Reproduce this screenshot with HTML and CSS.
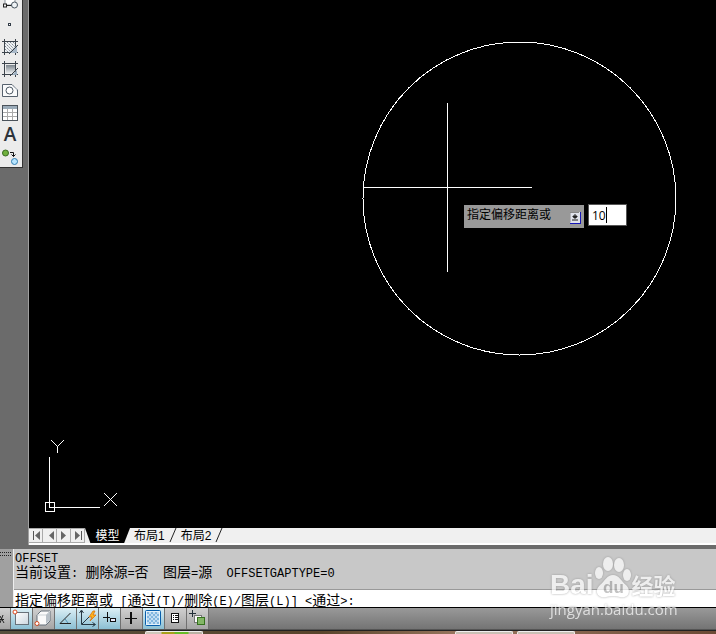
FILE: index.html
```html
<!DOCTYPE html>
<html lang="zh-CN">
<head>
<meta charset="utf-8">
<title>CAD</title>
<link rel="stylesheet" href="styles.css">
</head>
<body>
<main class="workspace">
  <aside class="dock">
    <div class="tools">
      <button class="tool" aria-label="块"><svg width="22" height="22"><path d="M5 5H15V14H5Z" fill="#fff" stroke="#8a939c"/><path d="M4.500 14.500H13" stroke="#222"/><rect x="3.500" y="13" width="3" height="3" fill="#eee" stroke="#222"/><circle cx="14.500" cy="14" r="3" fill="#eef2f5" stroke="#48545f"/></svg></button>
      <button class="tool" aria-label="点"><svg width="22" height="22"><rect x="8.500" y="10.500" width="2" height="2" fill="#fff" stroke="#333d48"/></svg></button>
      <button class="tool" aria-label="图案填充"><svg width="22" height="22"><path d="M4.500 4V20M15.500 4V20M2 6.500H18M2 17.500H18" stroke="#3c444c" fill="none"/><path d="M5 7H15V17H5Z" fill="#eef1f4"/><path d="M5 14l3 3M5 11l6 6M5 8l9 9M7 7l8 8M10 7l5 5M13 7l2 2" stroke="#7b858f" stroke-dasharray="2 1"/><path d="M9 18L17 10V18Z" fill="#a8b8c8"/><path d="M9 19l9-9" stroke="#343c44"/></svg></button>
      <button class="tool" aria-label="渐变色"><svg width="22" height="22"><defs><linearGradient id="shade" x1="0" y1="0" x2="0" y2="1"><stop stop-color="#7b858d"/><stop offset="1" stop-color="#f4f5f6"/></linearGradient></defs><path d="M4.500 4V20M15.500 4V20M2 6.500H18M2 17.500H18" stroke="#3c444c"/><rect x="6" y="8" width="9" height="9" fill="url(#shade)"/><path d="M12 18l5-5v5Z" fill="#9dafc0"/><path d="M10 19l8-8" stroke="#343c44"/></svg></button>
      <button class="tool" aria-label="面域"><svg width="22" height="22"><path d="M2.500 5.500H12L17.500 11V17.500H2.500Z" fill="#f9fafb" stroke="#56616d"/><path d="M13 6l4 4v2Z" fill="#c5ccd2"/><circle cx="9.500" cy="11.500" r="3.500" fill="#fff" stroke="#4b5763"/></svg></button>
      <button class="tool" aria-label="表格"><svg width="22" height="22"><rect x="2.500" y="4.500" width="15" height="15" fill="#fff" stroke="#4b535b"/><path d="M3 6.500H17" stroke="#9aabb9" stroke-width="3"/><path d="M3 11.500H17M3 15.500H17M7.500 8V19M12.500 8V19" stroke="#aaa"/></svg></button>
      <button class="tool letter" aria-label="多行文字">A</button>
      <button class="tool" aria-label="添加选定对象"><svg width="22" height="22"><circle cx="5.500" cy="8" r="3" fill="#70b13d" stroke="#386b22"/><path d="M10 7.500h3.500v4M11.500 9.500l2 2 2-2" stroke="#111" fill="none"/><circle cx="14.500" cy="16.500" r="3" fill="#b7e5ff" stroke="#317eb1"/></svg></button>
    </div>
  </aside>
  <section class="view">
    <div class="canvas">
      <svg class="drawing" fill="none" stroke="#fff" shape-rendering="crispEdges">
        <circle cx="490.500" cy="198.500" r="156.500"/>
        <path d="M418.500 103V272M334 187.500H503"/>
        <path d="M16 502.500H25V511.500H16ZM20.500 457V507.500H71"/>
        <path d="M22 440L28.500 446.500L35 440M28.500 446V453M75 493L88 506M88 493L75 506"/>
      </svg>
      <div class="prompt">
        <label class="hint" for="distance">指定偏移距离或</label>
        <button class="options" aria-label="选项"><svg width="11" height="12"><path d="M0 0H11V12H0Z" fill="#1616b8"/><path d="M0 0H10V11H0Z" fill="#e0e3ec"/><path d="M0 10.500V.500H9" fill="none" stroke="#888"/><path d="M5 2l0 2M3 4H7V5H6V6H4V5H3ZM2 8H8" fill="#222" stroke="#222"/></svg></button>
        <span class="entry"><input id="distance" value="10"><i class="caret"></i></span>
      </div>
    </div>
    <nav class="tabs">
      <button class="step" aria-label="第一个"><svg width="14" height="14"><path d="M4.500 2V11" stroke="#555"/><path d="M11 2V11L6 6.500Z" fill="#666"/></svg></button>
      <button class="step" aria-label="上一个"><svg width="14" height="14"><path d="M11 2V11L6 6.500Z" fill="#666"/></svg></button>
      <button class="step" aria-label="下一个"><svg width="14" height="14"><path d="M4 2V11L9 6.500Z" fill="#666"/></svg></button>
      <button class="step" aria-label="最后一个"><svg width="14" height="14"><path d="M10.500 2V11" stroke="#555"/><path d="M4 2V11L9 6.500Z" fill="#666"/></svg></button>
      <button class="tab current">模型</button>
      <button class="tab">布局1</button><svg class="slash" width="8" height="15"><path d="M7 0L1 14" stroke="#222"/></svg>
      <button class="tab">布局2</button><svg class="slash" width="8" height="15"><path d="M7 0L1 14" stroke="#222"/></svg>
    </nav>
  </section>
</main>
<section class="command">
  <div class="grip"></div>
  <div class="log">
    <p class="line"><code>OFFSET</code></p>
    <p class="line">当前设置<code>: </code>删除源<code>=</code>否<code>  </code>图层<code>=</code>源<code>  OFFSETGAPTYPE=0</code></p>
    <p class="line ask">指定偏移距离或<code> [</code>通过<code>(T)/</code>删除<code>(E)/</code>图层<code>(L)] &lt;</code>通过<code>&gt;:</code></p>
  </div>
</section>
<footer class="status">
  <button class="mode" aria-label="推断约束"><svg width="22" height="22"><path d="M10 11.500h5M11 15l3-8M11 8l4 7" stroke="#222"/></svg></button>
  <button class="mode on" aria-label="捕捉"><svg width="22" height="22"><defs><linearGradient id="sheet" x2="1" y2="1"><stop stop-color="#fff"/><stop offset="1" stop-color="#ccd7df"/></linearGradient></defs><rect x="4.500" y="4.500" width="13" height="12" fill="url(#sheet)" stroke="#68727a"/><circle cx="4" cy="4" r="2" fill="#fff" stroke="#e14c20"/></svg></button>
  <button class="mode" aria-label="三维捕捉"><svg width="22" height="22"><path d="M4 7L8 3H17V13L13 17H4Z" fill="#fafafa" stroke="#66717b"/><path d="M13 7V16L17 12V4Z" fill="#b8c0c7"/><path d="M4 7H13L17 3" fill="none" stroke="#ccd2d6"/><circle cx="4" cy="15.500" r="2" fill="#fff" stroke="#d4481d"/></svg></button>
  <button class="mode on" aria-label="极轴"><svg width="22" height="22"><path d="M15.500 5L5 15.500H16" fill="none" stroke="#222"/><path d="M10 11l3 4" stroke="#4f91b3"/></svg></button>
  <button class="mode on" aria-label="动态 UCS"><svg width="22" height="22"><path d="M4.500 3V16.500H18M2.500 5l2-3 2 3M15.500 14.500l3 2-3 2M5 16L12 9" fill="none" stroke="#273843"/><path d="M16 3L12 9h3l-2 4 6-6h-3l2-4Z" fill="#ffb51b" stroke="#d9700b" stroke-width=".8"/></svg></button>
  <button class="mode on" aria-label="动态输入"><svg width="22" height="22"><path d="M8.500 4V14M4 9.500H11" stroke="#111"/><rect x="11.500" y="10.500" width="5" height="3" fill="#eef" stroke="#111"/></svg></button>
  <button class="mode" aria-label="线宽"><svg width="22" height="22"><path d="M10 4V16" stroke="#111" stroke-width="2"/><path d="M4 10.500H16" stroke="#111"/></svg></button>
  <button class="mode on" aria-label="透明度"><svg width="22" height="22"><defs><pattern id="check" width="4" height="4" patternUnits="userSpaceOnUse"><path d="M0 0h4v4H0Z" fill="#c2def2"/><path d="M0 0h2v2H0ZM2 2h2v2H2Z" fill="#82b6df"/></pattern></defs><rect x="2.500" y="2.500" width="15" height="15" rx="1" fill="url(#check)" stroke="#075fac"/><rect x="3.500" y="3.500" width="13" height="13" fill="none" stroke="#e4f2fb"/></svg></button>
  <button class="mode" aria-label="快捷特性"><svg width="22" height="22"><rect x="6.500" y="5.500" width="7" height="9" fill="#fff" stroke="#111"/><path d="M8 7.500h1M10 7.500h3M8 9.500h1M10 9.500h3M8 11.500h1M10 11.500h3" stroke="#111"/></svg></button>
  <button class="mode" aria-label="选择循环"><svg width="22" height="22"><path d="M5.500 2V9M2 5.500H9" stroke="#222e38"/><rect x="7.500" y="7.500" width="7" height="7" fill="#fafafa" stroke="#777"/><rect x="10.500" y="9.500" width="7" height="7" fill="#83b667" stroke="#35711e"/></svg></button>
</footer>
<div class="taskbar"><i class="app first"></i><i class="app second"></i><i class="app third"></i></div>
<div class="watermark">
  <div class="brand"><b class="bai">Bai</b><svg class="paw" width="38" height="42"><g fill="#fff"><ellipse cx="5" cy="16" rx="4" ry="6"/><ellipse cx="14" cy="7" rx="5" ry="7"/><ellipse cx="25" cy="8" rx="5" ry="7"/><ellipse cx="33" cy="18" rx="4" ry="6"/><path d="M19 18C13 18 11 24 6 28C-1 35 5 42 12 40Q19 38 26 40C34 42 38 34 32 28C27 24 25 18 19 18Z"/></g><text class="du" x="9" y="36">du</text></svg><b class="cn">经验</b></div>
  <div class="site">jingyan.baidu.com</div>
</div>
</body>
</html>
```

FILE: styles.css
```css
* { box-sizing: border-box; }
body {
  margin: 0;
  height: 100vh;
  display: flex;
  flex-direction: column;
  position: relative;
  overflow: hidden;
  background: #6b6b6b;
  color: #000;
  font: 12px/14px "Liberation Sans", "Noto Sans CJK SC", sans-serif;
}
button, input { margin: 0; padding: 0; border: 0; border-radius: 0; font: inherit; color: inherit; }
button { background: none; }
svg { display: block; flex: none; }

.workspace { flex: 1; min-height: 0; display: flex; }
.dock { width: 28px; flex: none; overflow: hidden; }
.tools {
  width: 23px;
  margin-top: -9px;
  background: #ececec;
  border-right: 1px solid #333;
  border-bottom: 1px solid #333;
}
.tool { display: block; width: 22px; height: 22px; }
.letter { padding-right: 2px; font: 600 19px/22px "Open Sans", sans-serif; color: #2c333a; }
.view { flex: 1; min-width: 0; display: flex; flex-direction: column; border-left: 1px solid #a0a0a0; }
.canvas { flex: 1; min-height: 0; position: relative; background: #000; }
.drawing { width: 100%; height: 100%; }

.prompt { position: absolute; left: 435px; top: 204px; display: flex; align-items: flex-start; }
.hint { width: 120px; height: 23px; margin-top: 1px; padding-left: 3px; line-height: 20px; background: #999; }
.options { position: absolute; left: 106px; top: 8px; }
.entry { position: relative; margin-left: 4px; }
.entry input { display: block; width: 39px; height: 22px; padding-left: 3px; background: #fff; border: 1px solid #555; font: 12px/20px "Open Sans", sans-serif; }
.caret { position: absolute; left: 18px; top: 3px; width: 1px; height: 16px; background: #000; }

.tabs { height: 17px; flex: none; display: flex; background: #f0f0f0; border-bottom: 2px solid #fff; }
.step { width: 14px; height: 15px; border: 1px solid #aaa; border-width: 1px 1px 1px 0; }
.tab { height: 15px; padding: 2px 4px 0; line-height: 13px; }
.current { width: 45px; padding: 2px 10px 0; background: #000; color: #fff; clip-path: polygon(0 0, 100% 0, 87% 100%, 12% 100%); }

.command { display: flex; margin-top: 4px; background: #c8c8c8; }
.grip { width: 14px; flex: none; background: #a0a0a0; border-right: 1px solid #eee; position: relative; }
.grip::before { content: ""; position: absolute; top: 3px; left: 0; width: 12px; height: 4px; background: repeating-linear-gradient(90deg, #222 0 1px, transparent 1px 2px); mask: linear-gradient(#000 0 1px, transparent 1px 3px, #000 3px); }
.log { flex: 1; min-width: 0; }
.line { height: 15px; margin: 0; padding-left: 1px; white-space: pre; font-family: "Noto Sans CJK SC", sans-serif; font-size: 14px; line-height: 15px; }
.line code { font-family: "Liberation Mono", monospace; font-size: 12px; }
.ask { height: 18px; margin-top: 10px; line-height: 19px; background: #fff; border-top: 1px solid #999; }

.status { height: 23px; display: flex; overflow: hidden; background: linear-gradient(#999, #747474); border-top: 1px solid #000; border-bottom: 1px solid #555; }
.mode { width: 22px; height: 21px; flex: none; background: linear-gradient(#d0d0d0, #a5a5a5); border-right: 1px solid #707070; }
.mode:first-child { margin-left: -11px; }
.on { background: linear-gradient(#dceff5, #8bbfd3); }
.taskbar { height: 4px; flex: none; position: relative; background: linear-gradient(90deg, #57503d, #5a452c 45%, #9b7860 65%, #6c4a35); border-top: 1px solid #222; }
.app { position: absolute; top: 0; width: 58px; height: 4px; background: #c9c0b4; border: 1px solid #eee; border-bottom: 0; border-radius: 2px 2px 0 0; }
.first { left: 145px; background: linear-gradient(90deg, #d0c8bb 15px, #a8a11c 16px 28px, #68bd28 29px 42px, #b9b2a3 43px); }
.second { left: 455px; }
.third { left: 517px; }

.watermark { position: absolute; left: 550px; bottom: 15px; color: #fff; opacity: .7; pointer-events: none; filter: drop-shadow(0 0 1px #888); }
.brand { display: flex; align-items: flex-end; height: 42px; }
.bai { font: bold 28px/28px "Liberation Sans", sans-serif; }
.cn { font: bold 22px/30px "Noto Sans CJK SC", sans-serif; }
.du { font: bold 17px "Liberation Sans", sans-serif; fill: #aaa; }
.site { font: 15px/20px "Open Sans", sans-serif; }
```
